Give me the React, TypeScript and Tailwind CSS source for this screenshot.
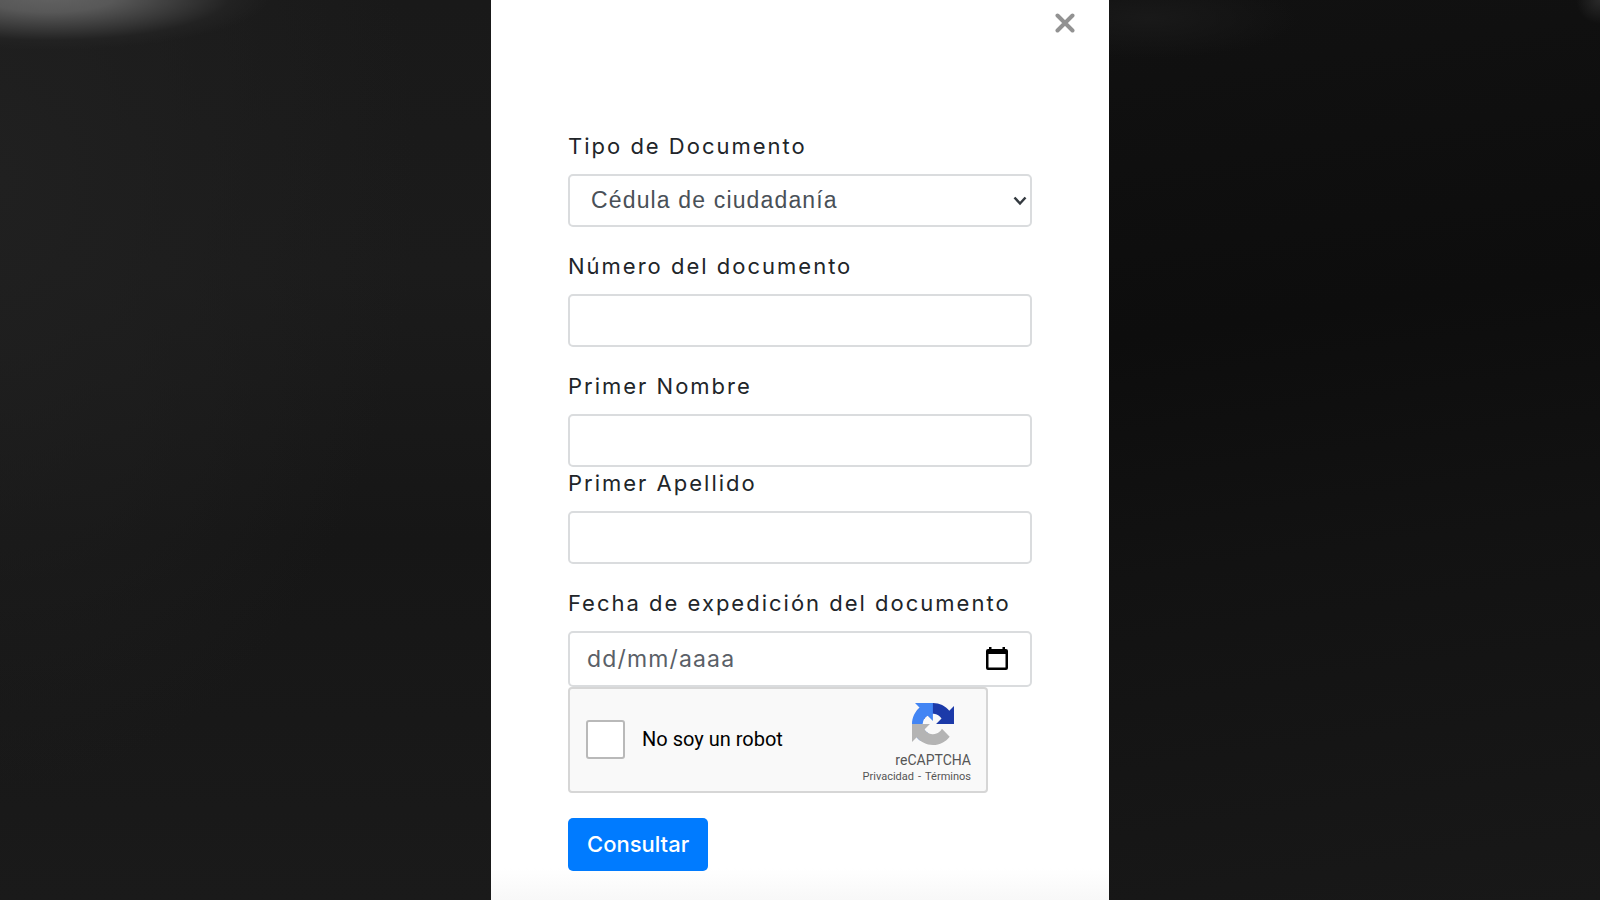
import { useState } from "react"

interface FormData {
  documentType: string
  documentNumber: string
  firstName: string
  lastName: string
  issueDate: string
}

const labelClass = "mb-[11px] block text-[22px] leading-[33px] tracking-[2px] text-[#212529]"
const inputClass =
  "block h-[53px] w-full rounded-[5px] border-2 border-[#dadcde] bg-white px-[18px] text-[23px] text-[#495057] focus:border-blue-400 focus:outline-none"

function RecaptchaLogo() {
  return (
    <svg viewBox="0 0 64 64" className="h-[42px] w-[42px]" aria-hidden="true">
      <path
        fill="#1c3aa9"
        d="M64 31.955l-.033-1.37V4.687l-7.16 7.16C50.948 4.674 42.033.093 32.05.093c-10.4 0-19.622 4.96-25.458 12.64l11.736 11.86a15.55 15.55 0 0 1 4.754-5.334c2.05-1.6 4.952-2.906 8.968-2.906.485 0 .86.057 1.135.163 4.976.393 9.288 3.14 11.828 7.124l-8.307 8.307L64 31.953"
      />
      <path
        fill="#4285f4"
        d="M31.862.094l-1.37.033H4.594l7.16 7.16C4.58 13.147 0 22.06 0 32.046c0 10.4 4.96 19.622 12.64 25.458L24.5 45.768a15.55 15.55 0 0 1-5.334-4.754c-1.6-2.05-2.906-4.952-2.906-8.968 0-.485.057-.86.163-1.135.393-4.976 3.14-9.288 7.124-11.828l8.307 8.307L31.86.095"
      />
      <path
        fill="#b4b4b4"
        d="M.001 32.045l.033 1.37v25.898l7.16-7.16c5.86 7.173 14.774 11.754 24.76 11.754 10.4 0 19.622-4.96 25.458-12.64l-11.736-11.86a15.55 15.55 0 0 1-4.754 5.334c-2.05 1.6-4.952 2.906-8.968 2.906-.485 0-.86-.057-1.135-.163-4.976-.393-9.288-3.14-11.828-7.124l8.307-8.307c-10.522.04-22.4.066-27.295-.005"
      />
    </svg>
  )
}

export default function App() {
  const [form, setForm] = useState<FormData>({
    documentType: "cc",
    documentNumber: "",
    firstName: "",
    lastName: "",
    issueDate: "",
  })
  const [isHuman, setIsHuman] = useState(false)

  const update = (field: keyof FormData, value: string) => {
    setForm({ ...form, [field]: value })
  }

  return (
    <div className="flex min-h-screen bg-[#161616] font-['Inter',sans-serif]">
      {/* Backdrop, left side */}
      <div
        aria-hidden="true"
        className="flex-1 bg-[radial-gradient(ellipse_220px_54px_at_50px_-4px,#626262,#585858_30%,#393939_60%,#222222_82%,transparent),radial-gradient(ellipse_at_0%_20%,#202020,transparent_60%),linear-gradient(180deg,#191919,#1b1b1b_30%,#161616_60%,#1a1a1a)]"
      />

      {/* Modal */}
      <main className="w-full max-w-[618px] bg-[linear-gradient(0deg,#f8f8f8,#ffffff_32px)]">
        <div className="flex justify-end px-[34px] pt-[13px]">
          <button type="button" aria-label="Cerrar" className="h-5 w-5 text-[#929292] hover:text-black">
            <svg viewBox="0 0 20 20" className="h-5 w-5" fill="none" stroke="currentColor" strokeWidth="4" strokeLinecap="round">
              <path d="M2.5 2.5l15 15M17.5 2.5l-15 15" />
            </svg>
          </button>
        </div>

        <form className="px-4 pt-[97px] pb-7 sm:px-[77px]" onSubmit={(e) => e.preventDefault()}>
          <div className="mb-[23px]">
            <label htmlFor="documentType" className={labelClass}>Tipo de Documento</label>
            <div className="relative">
              <select
                id="documentType"
                value={form.documentType}
                onChange={(e) => update("documentType", e.target.value)}
                className="block h-[53px] w-full appearance-none rounded-[5px] border-2 border-[#dadcde] bg-white pr-10 pl-[21px] font-['Liberation_Sans',sans-serif] text-[23px] tracking-wider text-[#495057] focus:border-blue-400 focus:outline-none"
              >
                <option value="cc">Cédula de ciudadanía</option>
                <option value="ce">Cédula de extranjería</option>
                <option value="pa">Pasaporte</option>
              </select>
              <svg
                viewBox="0 0 14 10"
                className="pointer-events-none absolute top-[22px] right-[5px] h-[10px] w-[14px]"
                fill="none"
                stroke="#343a40"
                strokeWidth="2.5"
                aria-hidden="true"
              >
                <path d="M1.5 1.5L7 7.5l5.5-6" />
              </svg>
            </div>
          </div>

          <div className="mb-[23px]">
            <label htmlFor="documentNumber" className={labelClass}>Número del documento</label>
            <input
              id="documentNumber"
              type="text"
              value={form.documentNumber}
              onChange={(e) => update("documentNumber", e.target.value)}
              className={inputClass}
            />
          </div>

          <div>
            <label htmlFor="firstName" className={labelClass}>Primer Nombre</label>
            <input
              id="firstName"
              type="text"
              value={form.firstName}
              onChange={(e) => update("firstName", e.target.value)}
              className={inputClass}
            />
          </div>

          <div className="mb-[23px]">
            <label htmlFor="lastName" className={labelClass}>Primer Apellido</label>
            <input
              id="lastName"
              type="text"
              value={form.lastName}
              onChange={(e) => update("lastName", e.target.value)}
              className={inputClass}
            />
          </div>

          <div>
            <label htmlFor="issueDate" className={labelClass}>Fecha de expedición del documento</label>
            <div className="flex h-14 items-center rounded-[5px] border-2 border-[#dadcde] bg-white pr-[22px] pl-[17px]">
              <input
                id="issueDate"
                type="text"
                placeholder="dd/mm/aaaa"
                value={form.issueDate}
                onChange={(e) => update("issueDate", e.target.value)}
                className="min-w-0 flex-1 text-[23px] tracking-wider text-[#495057] placeholder:text-[#5a6067] focus:outline-none"
              />
              <button type="button" aria-label="Abrir calendario" className="h-6 w-[22px]">
                <svg viewBox="0 0 22 24" className="h-6 w-[22px]">
                  <path
                    fillRule="evenodd"
                    d="M3 0h2.5v2h11V0H19v2h1a2 2 0 0 1 2 2v17a2 2 0 0 1-2 2H2a2 2 0 0 1-2-2V4a2 2 0 0 1 2-2h1zM2.5 7v13.5h17V7z"
                  />
                </svg>
              </button>
            </div>
          </div>

          {/* Captcha */}
          <div className="flex h-[106px] max-w-[420px] justify-between rounded-[4px] border-2 border-[#d6d6d6] bg-[#f9f9f9] pt-[14px] pr-[15px] pl-4 font-['Roboto',sans-serif]">
            <div className="flex h-[72px] items-center gap-[17px]">
              <input
                id="captcha"
                type="checkbox"
                checked={isHuman}
                onChange={(e) => setIsHuman(e.target.checked)}
                className="h-[39px] w-[39px] appearance-none rounded-[3px] border-2 border-[#b9b9b9] bg-white checked:bg-green-500"
              />
              <label htmlFor="captcha" className="text-[20px] leading-6 text-black">No soy un robot</label>
            </div>
            <div className="flex flex-col items-end">
              <div className="pr-[17px]">
                <RecaptchaLogo />
              </div>
              <div className="mt-[5px] text-[14px] leading-5 text-[#555555]">reCAPTCHA</div>
              <div className="flex gap-1 text-[11px] leading-[14px] text-[#555555]">
                <a href="#privacidad">Privacidad</a>
                <span>-</span>
                <a href="#terminos">Términos</a>
              </div>
            </div>
          </div>

          <button
            type="submit"
            className="mt-[25px] h-[53px] rounded-[5px] bg-[#007bff] px-[19px] text-[22px] font-medium text-white hover:bg-blue-600"
          >
            Consultar
          </button>
        </form>
      </main>

      {/* Backdrop, right side */}
      <div
        aria-hidden="true"
        className="flex-1 bg-[radial-gradient(ellipse_24px_24px_at_100%_0%,#2a2a2a,transparent),radial-gradient(ellipse_150px_40px_at_8%_2%,#191919,transparent),linear-gradient(172deg,#111111,#0d0d0d_35%,#121212_60%,#181818)]"
      />
    </div>
  )
}
